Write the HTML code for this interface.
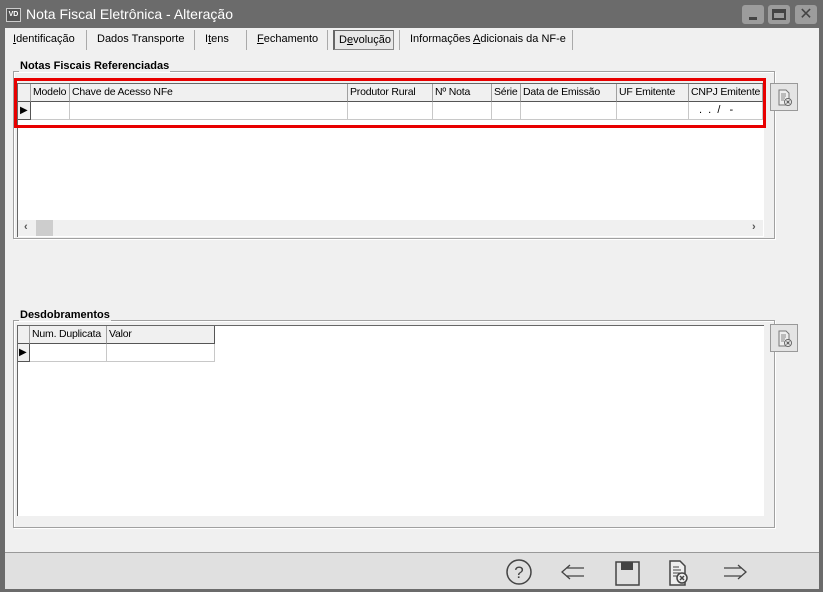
<!DOCTYPE html>
<html><head><style>
*{margin:0;padding:0;box-sizing:border-box}
body{width:823px;height:592px;background:#6b6b6b;font-family:"Liberation Sans","DejaVu Sans",sans-serif;font-size:11px;color:#000;position:relative;overflow:hidden}
.a{position:absolute}
.t{font-size:11px;white-space:nowrap}
.hdr{background:#f0f0f0;border-right:1px solid #a0a0a0;border-bottom:1px solid #555;height:18px;line-height:17px;padding-left:2px;white-space:nowrap;overflow:hidden;font-size:10.5px;letter-spacing:-0.2px}
.cell{border-right:1px solid #c8c8c8;border-bottom:1px solid #c8c8c8;height:18px;background:#fff;white-space:nowrap;overflow:hidden}
.wb{background:#9c9c9c;border-radius:3px;width:22px;height:19px;top:5px}
</style></head><body>
<div class="a" style="left:6px;top:8px;width:15px;height:14px;background:#555;border:1px solid #ccc;color:#fff;font-size:7px;font-weight:bold;line-height:12px;text-align:center">VD</div>
<div class="a" style="left:26px;top:6px;color:#fff;font-size:14px">Nota Fiscal Eletrônica - Alteração</div>
<div class="a wb" style="left:742px"><div class="a" style="left:7px;top:12px;width:8px;height:3px;background:#444"></div></div>
<div class="a wb" style="left:768px"><div class="a" style="left:4px;top:4px;width:14px;height:11px;border:2px solid #444;border-top-width:4px"></div></div>
<div class="a wb" style="left:795px;color:#444;font-weight:bold;font-size:16px;text-align:center;line-height:19px">✕</div>
<div class="a" style="left:5px;top:28px;width:814px;height:524px;background:#f0f0f0"></div>
<div class="a" style="left:5px;top:552px;width:814px;height:37px;background:#e0e0e0;border-top:1px solid #999"></div>
<div class="a t" style="left:13px;top:33px"><u>I</u>dentificação</div>
<div class="a" style="left:86px;top:30px;width:1px;height:20px;background:#aaa"></div>
<div class="a t" style="left:97px;top:33px">Dados Transporte</div>
<div class="a" style="left:194px;top:30px;width:1px;height:20px;background:#aaa"></div>
<div class="a t" style="left:205px;top:33px">I<u>t</u>ens</div>
<div class="a" style="left:246px;top:30px;width:1px;height:20px;background:#aaa"></div>
<div class="a t" style="left:257px;top:33px"><u>F</u>echamento</div>
<div class="a" style="left:327px;top:30px;width:1px;height:20px;background:#aaa"></div>
<div class="a" style="left:333px;top:30px;width:61px;height:20px;border:1px solid #888;border-top-color:#666;border-left:2px solid #666;background:#e8e8e8"></div>
<div class="a t" style="left:339px;top:34px">D<u>e</u>volução</div>
<div class="a" style="left:399px;top:30px;width:1px;height:20px;background:#aaa"></div>
<div class="a t" style="left:410px;top:33px">Informações <u>A</u>dicionais da NF-e</div>
<div class="a" style="left:572px;top:30px;width:1px;height:20px;background:#aaa"></div>
<div class="a" style="left:13px;top:71px;width:762px;height:168px;border:1px solid #a0a0a0;box-shadow:inset 1px 1px #fff,1px 1px #fff"></div>
<div class="a" style="left:19px;top:60px;background:#f0f0f0;font-weight:bold;padding:0 1px">Notas Fiscais Referenciadas</div>
<div class="a" style="left:17px;top:83px;width:747px;height:154px;background:#fff;border-left:1px solid #666;border-top:1px solid #666"></div>
<div class="a" style="left:18px;top:84px;display:flex">
<div class="hdr" style="width:13px"></div><div class="hdr" style="width:39px">Modelo</div><div class="hdr" style="width:278px">Chave de Acesso NFe</div><div class="hdr" style="width:85px">Produtor Rural</div><div class="hdr" style="width:59px">Nº Nota</div><div class="hdr" style="width:29px">Série</div><div class="hdr" style="width:96px">Data de Emissão</div><div class="hdr" style="width:72px">UF Emitente</div><div class="hdr" style="width:74px">CNPJ Emitente</div></div>
<div class="a" style="left:18px;top:102px;display:flex">
<div class="cell" style="width:13px;background:#f0f0f0;border-right:1px solid #555;border-bottom:1px solid #555;font-size:10px;line-height:17px;padding-left:2px">▶</div><div class="cell" style="width:39px"></div><div class="cell" style="width:278px"></div><div class="cell" style="width:85px"></div><div class="cell" style="width:59px"></div><div class="cell" style="width:29px"></div><div class="cell" style="width:96px"></div><div class="cell" style="width:72px"></div><div class="cell" style="width:74px;line-height:17px;padding-left:10px">. &nbsp;. &nbsp;/ &nbsp;&nbsp;-</div></div>
<div class="a" style="left:18px;top:220px;width:745px;height:16px;background:#f0f0f0"></div>
<div class="a" style="left:24px;top:221px;font-weight:bold;color:#555">‹</div>
<div class="a" style="left:36px;top:220px;width:17px;height:16px;background:#cdcdcd"></div>
<div class="a" style="left:752px;top:221px;font-weight:bold;color:#555">›</div>
<div class="a" style="left:14px;top:78px;width:752px;height:50px;border:3px solid #e80000"></div>
<div class="a" style="left:13px;top:320px;width:762px;height:208px;border:1px solid #a0a0a0;box-shadow:inset 1px 1px #fff,1px 1px #fff"></div>
<div class="a" style="left:19px;top:309px;background:#f0f0f0;font-weight:bold;padding:0 1px">Desdobramentos</div>
<div class="a" style="left:17px;top:325px;width:747px;height:191px;background:#fff;border-left:1px solid #666;border-top:1px solid #666"></div>
<div class="a" style="left:18px;top:326px;display:flex">
<div class="hdr" style="width:12px"></div><div class="hdr" style="width:77px">Num. Duplicata</div><div class="hdr" style="width:108px;border-right:1px solid #555">Valor</div></div>
<div class="a" style="left:18px;top:344px;display:flex">
<div class="cell" style="width:12px;background:#f0f0f0;border-right:1px solid #555;border-bottom:1px solid #555;font-size:10px;line-height:17px;padding-left:1px">▶</div><div class="cell" style="width:77px"></div><div class="cell" style="width:108px"></div></div>
<svg class="a" style="left:770px;top:83px" width="29" height="29"><rect x="0.5" y="0.5" width="27" height="27" fill="#e4e4e4" stroke="#999"/><path d="M9 7h7l3 3v12H9z" fill="#eee" stroke="#777"/><path d="M11 11h5M11 13h5M11 15h4M11 17h3" stroke="#888"/><circle cx="18" cy="19" r="3.5" fill="#eee" stroke="#666"/><path d="M16.5 17.5l3 3M19.5 17.5l-3 3" stroke="#555"/></svg>
<svg class="a" style="left:770px;top:324px" width="29" height="29"><rect x="0.5" y="0.5" width="27" height="27" fill="#e4e4e4" stroke="#999"/><path d="M9 7h7l3 3v12H9z" fill="#eee" stroke="#777"/><path d="M11 11h5M11 13h5M11 15h4M11 17h3" stroke="#888"/><circle cx="18" cy="19" r="3.5" fill="#eee" stroke="#666"/><path d="M16.5 17.5l3 3M19.5 17.5l-3 3" stroke="#555"/></svg>
<svg class="a" style="left:500px;top:556px" width="260" height="32" fill="none" stroke="#444" stroke-width="1.5">
<circle cx="19" cy="16" r="12"/>
<text x="19" y="22" font-size="17" text-anchor="middle" fill="#444" stroke="none" font-family="Liberation Sans">?</text>
<path d="M84 12H66M84 20H66M70 9l-8 7 8 7" stroke-width="1.3"/>
<path d="M116 6h23v23h-23z" /><rect x="121" y="6" width="12" height="8" fill="#444" stroke="none"/>
<path d="M170 5h10l5 5v19h-15z" fill="#eee"/><path d="M173 11h6M173 14h8M173 17h7M173 20h5" stroke-width="1"/><circle cx="182" cy="22" r="5" fill="#eee"/><path d="M180 20l4 4M184 20l-4 4"/>
<path d="M224 12h18M224 20h18M238 9l8 7-8 7" stroke-width="1.3"/>
</svg>
</body></html>
